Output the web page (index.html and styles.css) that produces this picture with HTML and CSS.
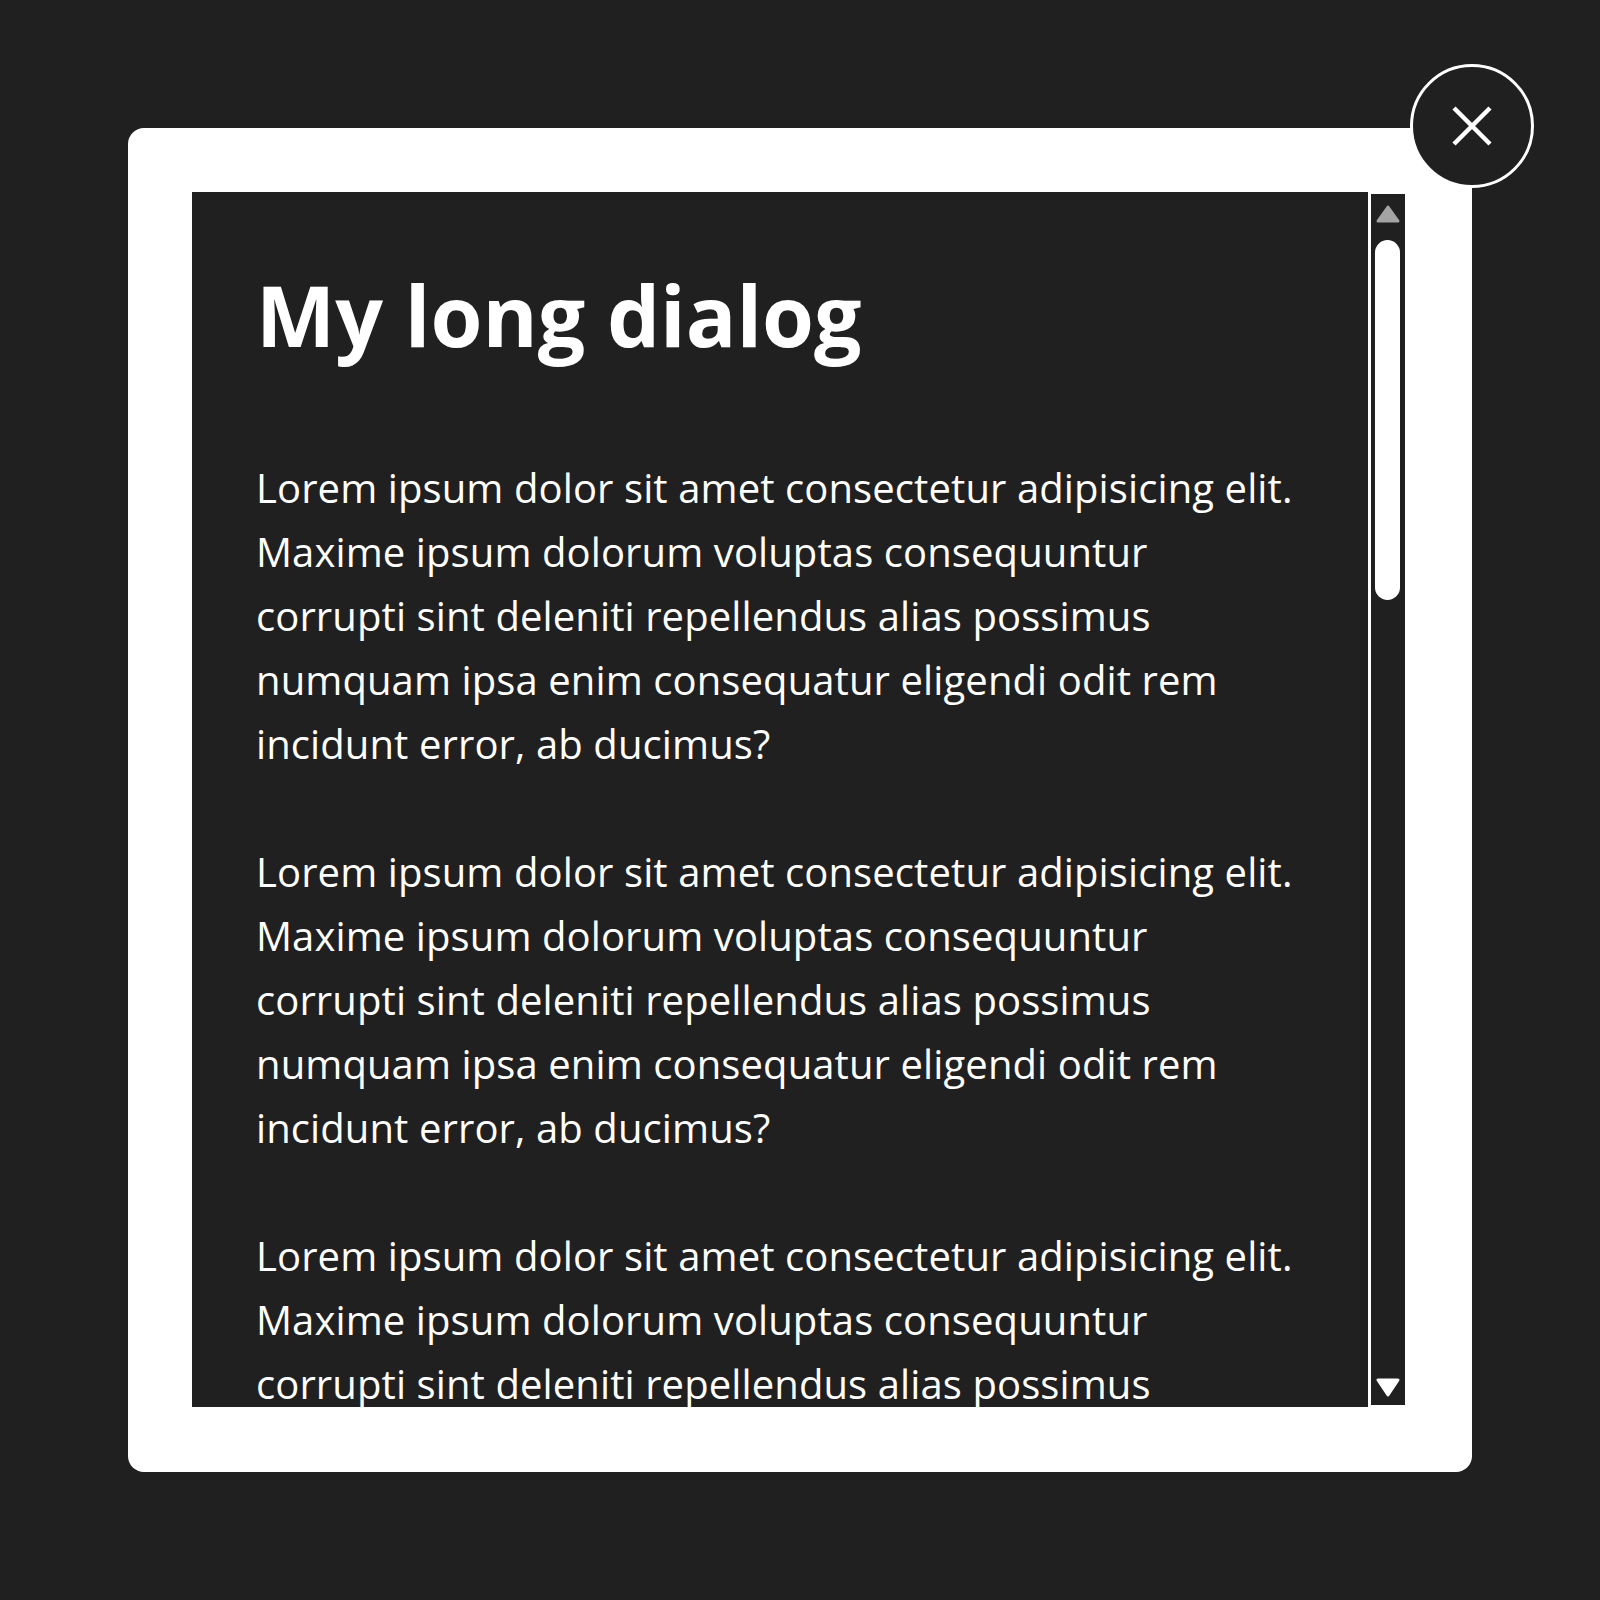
FILE: index.html
```html
<!DOCTYPE html>
<html lang="en">
<head>
<meta charset="utf-8">
<title>My long dialog</title>
<link rel="stylesheet" href="styles.css">
</head>
<body>
<div class="dialog">
  <div class="dialog-inner">
    <div class="content">
      <h1 class="title">My long dialog</h1>
      <p class="para">Lorem ipsum dolor sit amet consectetur adipisicing elit. Maxime ipsum dolorum voluptas consequuntur corrupti sint deleniti repellendus alias possimus numquam ipsa enim consequatur eligendi odit rem incidunt error, ab ducimus?</p>
      <p class="para">Lorem ipsum dolor sit amet consectetur adipisicing elit. Maxime ipsum dolorum voluptas consequuntur corrupti sint deleniti repellendus alias possimus numquam ipsa enim consequatur eligendi odit rem incidunt error, ab ducimus?</p>
      <p class="para">Lorem ipsum dolor sit amet consectetur adipisicing elit. Maxime ipsum dolorum voluptas consequuntur corrupti sint deleniti repellendus alias possimus numquam ipsa enim consequatur eligendi odit rem incidunt error, ab ducimus?</p>
    </div>
    <div class="scrollbar">
      <svg class="arrow arrow-up" width="24" height="18" viewBox="0 0 24 18"><polygon points="12,2 22,16 2,16" fill="#a3a3a3" stroke="#a3a3a3" stroke-width="3" stroke-linejoin="round"/></svg>
      <div class="thumb"></div>
      <div class="track-fill"></div>
      <svg class="arrow arrow-down" width="24" height="19" viewBox="0 0 24 19"><polygon points="2,2 22,2 12,17" fill="#ffffff" stroke="#ffffff" stroke-width="3" stroke-linejoin="round"/></svg>
    </div>
  </div>
  <button class="close" aria-label="Close">
    <svg width="42" height="42" viewBox="0 0 42 42"><path d="M3 3 L39 39 M39 3 L3 39" stroke="#ffffff" stroke-width="4.5" fill="none"/></svg>
  </button>
</div>
</body>
</html>
```

FILE: styles.css
```css
html, body {
  margin: 0;
  padding: 0;
  background: #202020;
}

body {
  width: 1600px;
  height: 1600px;
  font-family: "Open Sans", "Noto Sans", sans-serif;
  color: #ffffff;
}

.dialog {
  position: relative;
  margin: 128px 0 0 128px;
  width: 1344px;
  height: 1344px;
  box-sizing: border-box;
  padding: 64px;
  background: #ffffff;
  border-radius: 16px;
}

.dialog-inner {
  display: flex;
  height: 1216px;
  align-items: flex-start;
}

.content {
  width: 1176px;
  height: 1215px;
  box-sizing: border-box;
  background: #202020;
  overflow: hidden;
  padding: 72px 64px 0 64px;
}

.title {
  margin: 0;
  font-size: 84px;
  line-height: 102px;
  font-weight: 700;
  letter-spacing: 0;
}

.para {
  margin: 90px 0 0 0;
  font-size: 40px;
  line-height: 64px;
  letter-spacing: 0.1px;
}

.para + .para {
  margin-top: 64px;
}

.scrollbar {
  margin: 2px 0 0 3px;
  width: 34px;
  height: 1211px;
  box-sizing: border-box;
  background: #202020;
  display: flex;
  flex-direction: column;
  align-items: flex-start;
  padding: 11px 0 8px 5px;
}

.arrow {
  display: block;
}

.thumb {
  margin: 17px 0 0 -1px;
  width: 25px;
  height: 360px;
  border-radius: 13px;
  background: #ffffff;
}

.track-fill {
  flex: 1;
}

.close {
  position: absolute;
  top: -64px;
  right: -62px;
  width: 124px;
  height: 124px;
  box-sizing: border-box;
  border: 3px solid #ffffff;
  border-radius: 50%;
  background: #202020;
  padding: 0;
  display: flex;
  align-items: center;
  justify-content: center;
  cursor: pointer;
}

.close svg {
  display: block;
}
```
